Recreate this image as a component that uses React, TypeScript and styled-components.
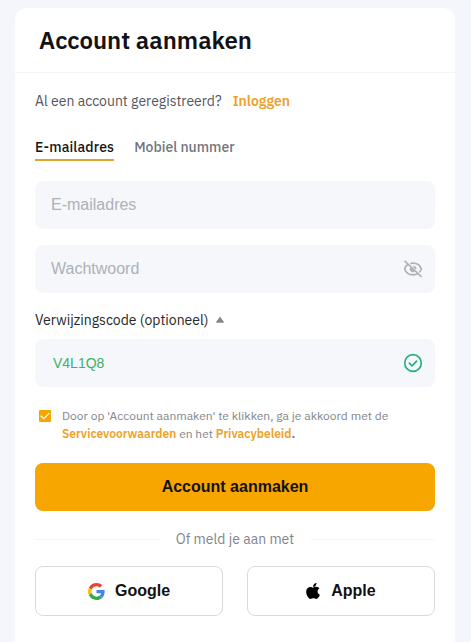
import React from "react";
import styled, { createGlobalStyle } from "styled-components";

const GlobalStyle = createGlobalStyle`
  * { box-sizing: border-box; }
  html, body { margin: 0; background: #f5f6fb; }
  body { font-family: "IBM Plex Sans", Roboto, sans-serif; color: #121214; overflow: hidden; }
  button, input { font-family: "Liberation Sans", Arial, sans-serif; }
`;

const Page = styled.main`
  height: 642px;
  padding: 8px 16px 0 15px;
  overflow: hidden;
`;

const Card = styled.section`
  height: 660px;
  background: #fff;
  border-radius: 12px;
`;

const Header = styled.header`
  height: 65px;
  padding: 0 24px;
  border-bottom: 1px solid #f3f3f5;
`;

const Title = styled.h1`
  margin: 0;
  font-size: 24px;
  line-height: 64px;
  font-weight: 600;
  white-space: nowrap;
`;

const Form = styled.form`
  display: flex;
  flex-direction: column;
  padding: 17px 20px 0;
`;

const LoginRow = styled.div`
  display: flex;
  gap: 11px;
  height: 22px;
  font-size: 14px;
  line-height: 22px;
  color: #55565c;
  white-space: nowrap;
`;

const Link = styled.a`
  color: #eda126;
  font-weight: 600;
`;

const Tabs = styled.nav`
  display: flex;
  gap: 20px;
  margin-top: 24px;
  height: 25px;
`;

const Tab = styled.span<{ $active?: boolean }>`
  height: 25px;
  font-size: 14px;
  line-height: 22px;
  font-weight: 500;
  letter-spacing: ${(p) => (p.$active ? "0.14px" : "0")};
  white-space: nowrap;
  color: ${(p) => (p.$active ? "#121214" : "#71757e")};
  border-bottom: 2px solid ${(p) => (p.$active ? "#e2a42b" : "transparent")};
`;

const Field = styled.label<{ $gap: number }>`
  display: flex;
  align-items: center;
  height: 48px;
  margin-top: ${(p) => p.$gap}px;
  padding: 0 12px 0 16px;
  background: #f5f7fa;
  border-radius: 8px;
`;

const Input = styled.input<{ $code?: boolean }>`
  flex: 1;
  min-width: 0;
  height: 24px;
  padding: 0 0 0 ${(p) => (p.$code ? 2 : 0)}px;
  border: 0;
  outline: 0;
  background: transparent;
  font-size: ${(p) => (p.$code ? 14 : 16)}px;
  color: #3db06b;
  &::placeholder { color: #adb1b8; opacity: 1; }
`;

const ReferralLabel = styled.div`
  display: flex;
  align-items: center;
  gap: 8px;
  height: 22px;
  margin-top: 16px;
  font-size: 14px;
  color: #26272b;
  white-space: nowrap;
`;

const Terms = styled.div`
  display: flex;
  gap: 11px;
  height: 36px;
  margin-top: 20px;
  padding-left: 4px;
  font-size: 12px;
  line-height: 18px;
  color: #81858c;
  white-space: nowrap;
`;

const Checkbox = styled.span`
  display: flex;
  width: 12px;
  height: 12px;
  margin-top: 3px;
  border-radius: 1px;
  background: #f7a600;
`;

const Submit = styled.button`
  height: 48px;
  margin-top: 20px;
  border: 0;
  border-radius: 8px;
  background: #f7a600;
  color: #121214;
  font-size: 16px;
  font-weight: 700;
`;

const Divider = styled.div`
  display: flex;
  align-items: center;
  gap: 16px;
  height: 22px;
  margin-top: 17px;
  font-size: 14px;
  color: #81858c;
  white-space: nowrap;
  &::before, &::after {
    content: "";
    flex: 1;
    height: 1px;
    background: #f5f5f7;
  }
`;

const Socials = styled.div`
  display: grid;
  grid-template-columns: 1fr 1fr;
  gap: 24px;
  margin-top: 16px;
`;

const SocialButton = styled.button<{ $gap: number }>`
  display: flex;
  align-items: center;
  justify-content: center;
  gap: ${(p) => p.$gap}px;
  height: 50px;
  padding: 0;
  border: 1px solid #d8dadd;
  border-radius: 8px;
  background: #fff;
  color: #121214;
  font-size: 16px;
  font-weight: 700;
`;

const HiddenEye = () => (
  <svg width="20" height="20" viewBox="0 0 20 20" fill="none" stroke="#adb1b8" strokeWidth="1.7">
    <path d="M5 5.200C3.400 6.300 2.200 8 1.600 10c1.300 3.600 4.400 5.800 8.400 5.800 1.900 0 3.600-.5 5-1.300" />
    <path d="M7.300 4.500c.9-.2 1.800-.3 2.700-.3 4 0 7.100 2.200 8.400 5.800-.5 1.400-1.200 2.500-2.200 3.400" />
    <path d="M10.300 7.500a2.500 2.500 0 0 1 2.300 2.600" />
    <path d="M7.900 8.400a2.500 2.500 0 0 0 3.700 3.700z" fill="#adb1b8" strokeWidth="1" />
    <path d="M1.600 1.800 18.700 18" />
  </svg>
);

const ValidMark = () => (
  <svg width="20" height="20" viewBox="0 0 20 20" fill="none" stroke="#27b079" strokeWidth="1.7">
    <circle cx="10" cy="10" r="8.300" />
    <path d="m5.900 9.700 3.100 3.100 5.100-5.200" />
  </svg>
);

const GoogleLogo = () => (
  <svg width="17" height="17" viewBox="0 0 48 48">
    <path fill="#EA4335" d="M24 9.500c3.540 0 6.710 1.220 9.210 3.600l6.850-6.850C35.900 2.380 30.470 0 24 0 14.620 0 6.510 5.380 2.560 13.220l7.980 6.190C12.430 13.720 17.740 9.500 24 9.500z" />
    <path fill="#4285F4" d="M46.980 24.550c0-1.570-.15-3.090-.38-4.550H24v9.020h12.940c-.58 2.960-2.260 5.480-4.780 7.180l7.730 6c4.510-4.180 7.090-10.360 7.090-17.650z" />
    <path fill="#FBBC05" d="M10.530 28.590A14.500 14.500 0 0 1 9.770 24c0-1.600.27-3.140.76-4.590l-7.980-6.190A23.900 23.900 0 0 0 0 24c0 3.880.92 7.540 2.560 10.780z" />
    <path fill="#34A853" d="M24 48c6.480 0 11.930-2.130 15.890-5.810l-7.730-6c-2.150 1.450-4.920 2.300-8.160 2.300-6.260 0-11.570-4.220-13.470-9.910l-7.980 6.190C6.510 42.620 14.620 48 24 48z" />
  </svg>
);

const AppleLogo = () => (
  <svg width="14" height="16" viewBox="0 14 384 452" preserveAspectRatio="none" fill="#000">
    <path d="M318.700 252.700c-.2-36.700 16.400-64.400 50-84.800-18.800-26.900-47.200-41.700-84.700-44.600-35.500-2.800-74.300 20.700-88.500 20.700-15 0-49.400-19.700-76.400-19.700C63.300 125.200 4 168.800 4 257.500c0 26.200 4.800 53.300 14.400 81.200 12.800 36.700 59 126.700 107.200 125.200 25.200-.6 43-17.900 75.800-17.900 31.800 0 48.300 17.900 76.400 17.900 48.600-.7 90.400-82.500 102.600-119.300-65.200-30.700-61.700-90-61.700-91.900zM262.100 88.500c27.300-32.400 24.800-61.900 24-72.500-24.100 1.400-52 16.400-67.900 34.900-17.500 19.800-27.800 44.300-25.600 71.900 26.100 2 49.900-11.400 69.500-34.300z" />
  </svg>
);

export default function App() {
  return (
    <>
      <GlobalStyle />
      <Page>
        <Card>
          <Header>
            <Title>Account aanmaken</Title>
          </Header>
          <Form onSubmit={(e) => e.preventDefault()}>
            <LoginRow>
              <span>Al een account geregistreerd?</span>
              <Link>Inloggen</Link>
            </LoginRow>
            <Tabs>
              <Tab $active>E-mailadres</Tab>
              <Tab>Mobiel nummer</Tab>
            </Tabs>
            <Field $gap={20}>
              <Input placeholder="E-mailadres" />
            </Field>
            <Field $gap={16}>
              <Input type="password" placeholder="Wachtwoord" />
              <HiddenEye />
            </Field>
            <ReferralLabel>
              <span>Verwijzingscode (optioneel)</span>
              <svg width="8" height="8" viewBox="0 0 8 8">
                <path d="M4 1.200 7.500 6.200H.5z" fill="#85878b" stroke="#85878b" strokeLinejoin="round" />
              </svg>
            </ReferralLabel>
            <Field $gap={8}>
              <Input $code defaultValue="V4L1Q8" />
              <ValidMark />
            </Field>
            <Terms>
              <Checkbox>
                <svg width="12" height="12" viewBox="0 0 12 12" fill="none" stroke="#fff" strokeWidth="1.200">
                  <path d="m1.700 5.700 3.100 3 5.500-5.500" />
                </svg>
              </Checkbox>
              <div>
                <div>Door op 'Account aanmaken' te klikken, ga je akkoord met de</div>
                <div>
                  <Link>Servicevoorwaarden</Link> en het <Link>Privacybeleid</Link>
                  <b>.</b>
                </div>
              </div>
            </Terms>
            <Submit>Account aanmaken</Submit>
            <Divider>Of meld je aan met</Divider>
            <Socials>
              <SocialButton type="button" $gap={10}>
                <GoogleLogo />
                Google
              </SocialButton>
              <SocialButton type="button" $gap={11}>
                <AppleLogo />
                Apple
              </SocialButton>
            </Socials>
          </Form>
        </Card>
      </Page>
    </>
  );
}
